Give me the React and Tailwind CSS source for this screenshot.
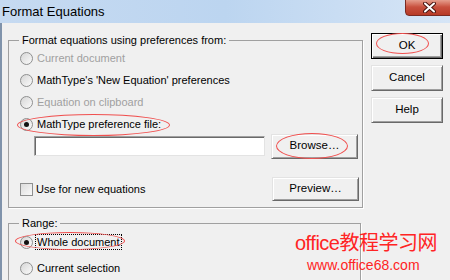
import React from "react";

const font = "font-['Segoe_UI','Liberation_Sans','Noto_Sans',sans-serif]";

const Radio = ({ checked }) => (
  <span className="relative flex h-[13px] w-[13px] shrink-0 items-center justify-center rounded-full border border-[#8e8f8f] bg-gradient-to-br from-[#d6d6d6] to-[#fbfbfb]">
    {checked && <span className="h-[5px] w-[5px] rounded-full bg-[#111]" />}
  </span>
);

const RadioRow = ({ label, checked, disabled, focus, className = "" }) => (
  <div className={`flex h-[22px] items-center pl-[11px] ${className}`}>
    <Radio checked={checked} />
    <span
      className={`ml-[2px] px-[1px] leading-[14px] ${disabled ? "text-[#a0a0a0]" : "text-black"} ${
        focus ? "border border-dotted border-black" : "border border-transparent"
      }`}
    >
      {label}
    </span>
  </div>
);

const Button = ({ children, primary, className = "" }) => (
  <button
    className={`flex h-[26px] items-center justify-center bg-[#f0f0f0] text-[11.5px] text-black ${
      primary
        ? "border border-black shadow-[inset_1px_1px_0_#fff,inset_-1px_-1px_0_#696969,inset_-2px_-2px_0_#a0a0a0]"
        : "border border-t-[#e3e3e3] border-l-[#e3e3e3] border-r-[#696969] border-b-[#696969] shadow-[inset_1px_1px_0_#fff,inset_-1px_-1px_0_#a0a0a0]"
    } ${className}`}
  >
    {children}
  </button>
);

const Ellipse = ({ className }) => (
  <div className={`pointer-events-none absolute rounded-[50%] border border-[#f0504f] ${className}`} />
);

export default function App() {
  return (
    <div className={`relative h-[280px] w-[450px] overflow-hidden bg-[#f0f0f0] text-[11px] ${font}`}>
      {/* title bar */}
      <div className="relative flex h-[23px] items-center bg-gradient-to-r from-[#c6daf1] via-[#bcd5f0] to-[#d6e5f6] pl-[2px]">
        <span className="text-[13px] leading-none text-black">Format Equations</span>
        <div className="absolute right-[-4px] top-[-2px] flex h-[18px] w-[49px] items-center justify-center rounded-b-[4px] border border-[#7a2b23] bg-gradient-to-b from-[#e8a898] via-[#c8503e] to-[#b73a26]">
          <svg width="13" height="11" viewBox="0 0 13 11" className="mt-[1px]">
            <path d="M2 1.5 L11 9.5 M11 1.5 L2 9.5" stroke="#4a1510" strokeWidth="4" strokeLinecap="round" />
            <path d="M2 1.5 L11 9.5 M11 1.5 L2 9.5" stroke="#fff" strokeWidth="2" strokeLinecap="round" />
          </svg>
        </div>
      </div>

      {/* body */}
      <div className="flex h-[257px]">
        <div className="w-[2px] bg-[#8093ab]" />
        <div className="flex pl-[6px]">
          <div className="flex w-[355px] flex-col pt-[9px]">
            <fieldset className="border border-[#a0a0a0] pb-[6px] shadow-[1px_1px_0_#fff]">
              <legend className="ml-[10px] px-[3px] leading-[16px]">Format equations using preferences from:</legend>
              <div className="-mt-[1px]">
                <RadioRow label="Current document" disabled />
                <RadioRow label="MathType's 'New Equation' preferences" />
                <RadioRow label="Equation on clipboard" disabled />
                <RadioRow label="MathType preference file:" checked />
              </div>
              <div className="-mt-[2px] flex h-[26px] items-center pl-[25px]">
                <div className="h-[20px] w-[231px] border border-t-[#a0a0a0] border-l-[#a0a0a0] border-r-[#e3e3e3] border-b-[#e3e3e3] bg-white shadow-[inset_1px_1px_0_#696969]" />
                <Button className="ml-[6px] w-[87px] !h-[25px]">Browse…</Button>
              </div>
              <div className="mt-[18px] flex h-[24px] items-center">
                <div className="flex items-center pl-[11px]">
                  <span className="h-[13px] w-[13px] border border-[#8e8f8f] bg-gradient-to-br from-[#dcdcdc] to-[#fafafa]" />
                  <span className="ml-[3px]">Use for new equations</span>
                </div>
                <Button className="ml-auto mr-[3px] w-[87px] !h-[24px]">Preview…</Button>
              </div>
            </fieldset>

            <fieldset className="mt-[7px] w-[353px] border border-[#a0a0a0] pb-[4px] shadow-[1px_1px_0_#fff]">
              <legend className="ml-[10px] px-[3px] leading-[16px]">Range:</legend>
              <RadioRow label="Whole document" checked focus />
              <RadioRow label="Current selection" className="mt-[4px]" />
            </fieldset>
          </div>

          <div className="ml-[8px] flex flex-col gap-[6px] pt-[10px]">
            <Button primary className="w-[72px]">OK</Button>
            <Button className="w-[72px]">Cancel</Button>
            <Button className="w-[72px]">Help</Button>
          </div>
        </div>
      </div>

      {/* annotations */}
      <Ellipse className="left-[376px] top-[33px] h-[21px] w-[53px]" />
      <Ellipse className="left-[17px] top-[114px] h-[22px] w-[153px]" />
      <Ellipse className="left-[276px] top-[133px] h-[26px] w-[72px]" />
      <Ellipse className="left-[15px] top-[232px] h-[18px] w-[110px]" />

      {/* watermark */}
      <div className="pointer-events-none absolute left-[295px] top-[231px] whitespace-nowrap font-['Liberation_Sans','Noto_Sans_CJK_SC',sans-serif] text-[#ff2424]">
        <div className="text-[20px] leading-[24px] tracking-[-0.5px]">office教程学习网</div>
        <div className="ml-[12px] mt-[2px] text-[14px] leading-[16px]">www.office68.com</div>
      </div>
    </div>
  );
}
